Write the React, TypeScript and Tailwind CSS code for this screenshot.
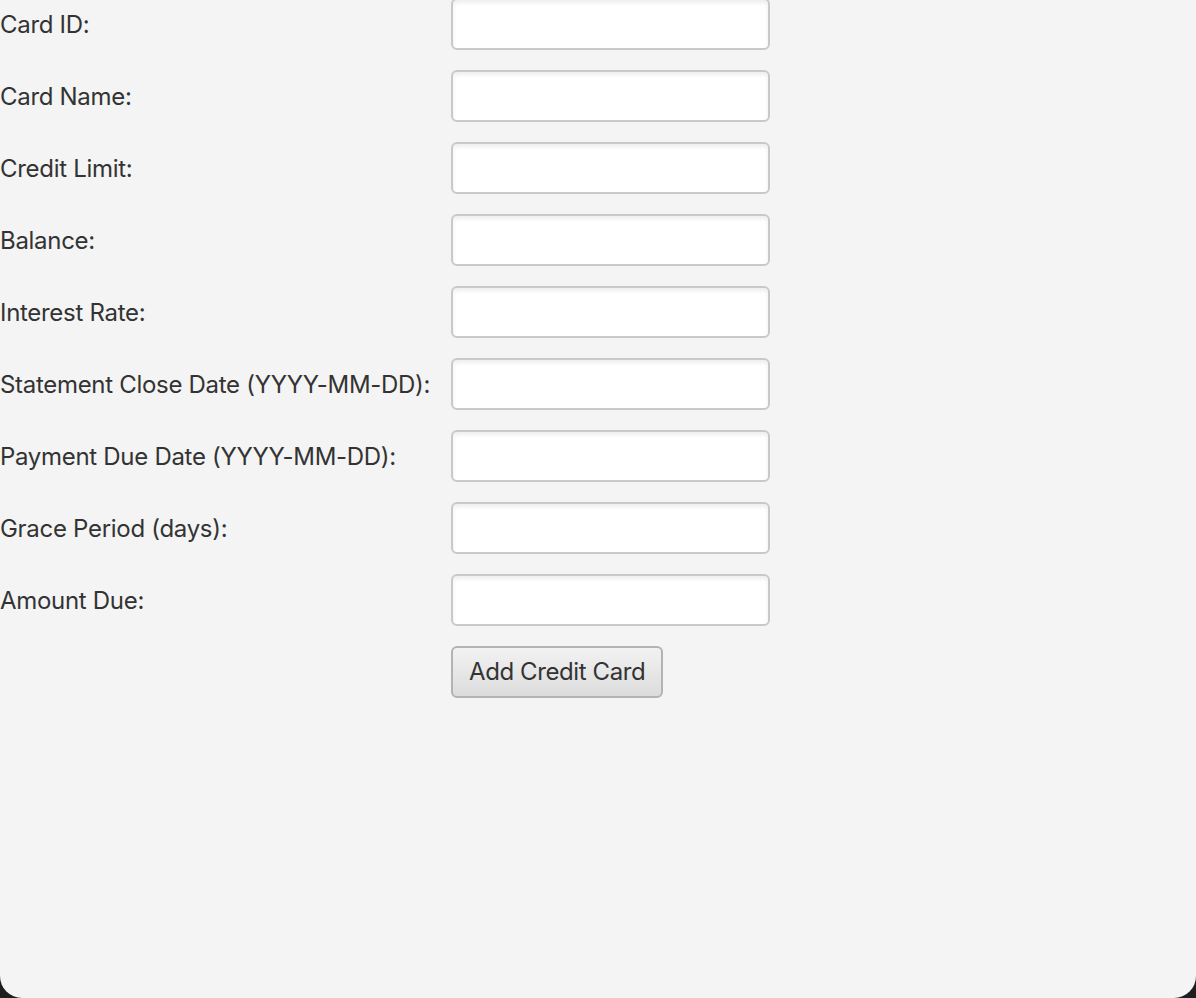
import { FC } from "react";

const fields = [
  "Card ID:",
  "Card Name:",
  "Credit Limit:",
  "Balance:",
  "Interest Rate:",
  "Statement Close Date (YYYY-MM-DD):",
  "Payment Due Date (YYYY-MM-DD):",
  "Grace Period (days):",
  "Amount Due:",
];

const App: FC = () => {
  return (
    <div className="w-[1196px] h-[998px] bg-[#1e1e1e] overflow-hidden">
      <div
        className="w-full h-full bg-[#f4f4f4] rounded-b-[22px] overflow-hidden text-[#333333]"
        style={{ fontFamily: "Inter, 'Noto Sans', sans-serif" }}
      >
        <div className="grid grid-cols-[431px_319px] gap-x-[20px] gap-y-[20px] mt-[-2px] items-center">
          {fields.map((label) => (
            <div key={label} className="contents">
              <div className="text-[24px] tracking-[-0.3px] leading-none whitespace-nowrap pt-[2px]">
                {label}
              </div>
              <input
                type="text"
                className="h-[52px] w-full bg-white border-2 border-[#c9c9c9] rounded-[6px] outline-none shadow-[inset_0_3px_4px_rgba(0,0,0,0.07)]"
              />
            </div>
          ))}
          <div></div>
          <div>
            <button
              type="button"
              className="h-[52px] px-[16px] border-2 border-[#b3b3b3] rounded-[6px] bg-gradient-to-b from-[#f2f2f2] to-[#dcdcdc] text-[24px] tracking-[-0.4px] text-[#333333]"
            >
              Add Credit Card
            </button>
          </div>
        </div>
      </div>
    </div>
  );
};

export default App;
